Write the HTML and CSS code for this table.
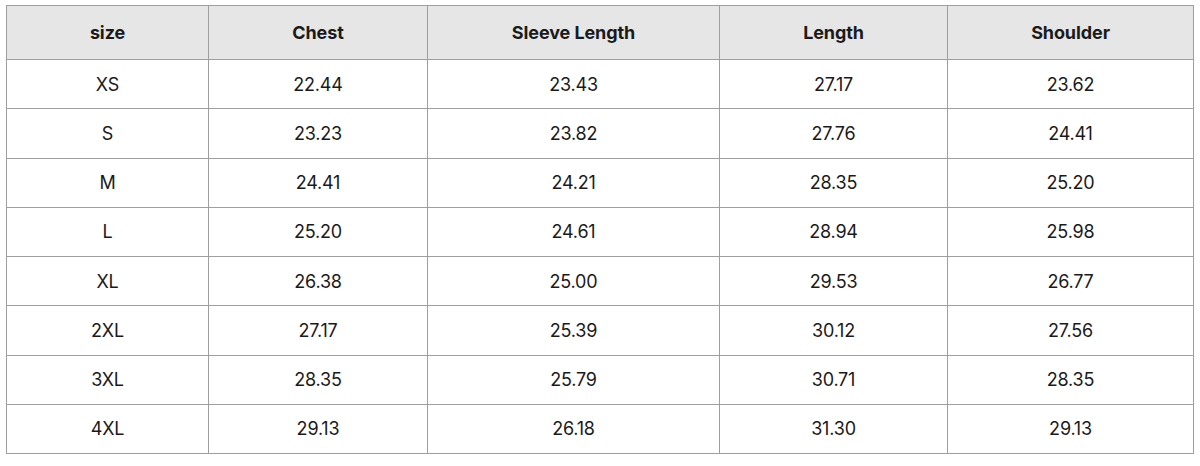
FILE: index.html
```html
<!DOCTYPE html>
<html>
<head>
<meta charset="utf-8">
<link rel="stylesheet" href="styles.css">
</head>
<body>
<table class="size-table">
  <colgroup>
    <col class="c1"><col class="c2"><col class="c3"><col class="c4"><col class="c5">
  </colgroup>
  <thead>
    <tr><th>size</th><th>Chest</th><th>Sleeve Length</th><th>Length</th><th>Shoulder</th></tr>
  </thead>
  <tbody>
    <tr><td>XS</td><td>22.44</td><td>23.43</td><td>27.17</td><td>23.62</td></tr>
    <tr><td>S</td><td>23.23</td><td>23.82</td><td>27.76</td><td>24.41</td></tr>
    <tr><td>M</td><td>24.41</td><td>24.21</td><td>28.35</td><td>25.20</td></tr>
    <tr><td>L</td><td>25.20</td><td>24.61</td><td>28.94</td><td>25.98</td></tr>
    <tr><td>XL</td><td>26.38</td><td>25.00</td><td>29.53</td><td>26.77</td></tr>
    <tr><td>2XL</td><td>27.17</td><td>25.39</td><td>30.12</td><td>27.56</td></tr>
    <tr><td>3XL</td><td>28.35</td><td>25.79</td><td>30.71</td><td>28.35</td></tr>
    <tr><td>4XL</td><td>29.13</td><td>26.18</td><td>31.30</td><td>29.13</td></tr>
  </tbody>
</table>
</body>
</html>
```
FILE: styles.css
```css
html, body {
  margin: 0;
  padding: 0;
  background: #ffffff;
}
body {
  padding: 5px 0 0 6px;
  font-family: Inter, "Liberation Sans", sans-serif;
  color: #1a1a1a;
}
.size-table {
  border-collapse: collapse;
  table-layout: fixed;
  width: 1187px;
}
.c1 { width: 202px; }
.c2 { width: 219px; }
.c3 { width: 292px; }
.c4 { width: 228px; }
.c5 { width: 246px; }
.size-table th,
.size-table td {
  border: 1px solid #9e9e9e;
  text-align: center;
  padding: 0;
  font-size: 18px;
}
.size-table th {
  background: #e6e6e6;
  font-weight: 700;
  letter-spacing: -0.1px;
  height: 53px;
}
.size-table td {
  font-weight: 400;
  letter-spacing: -0.2px;
  height: 48.25px;
}
```
